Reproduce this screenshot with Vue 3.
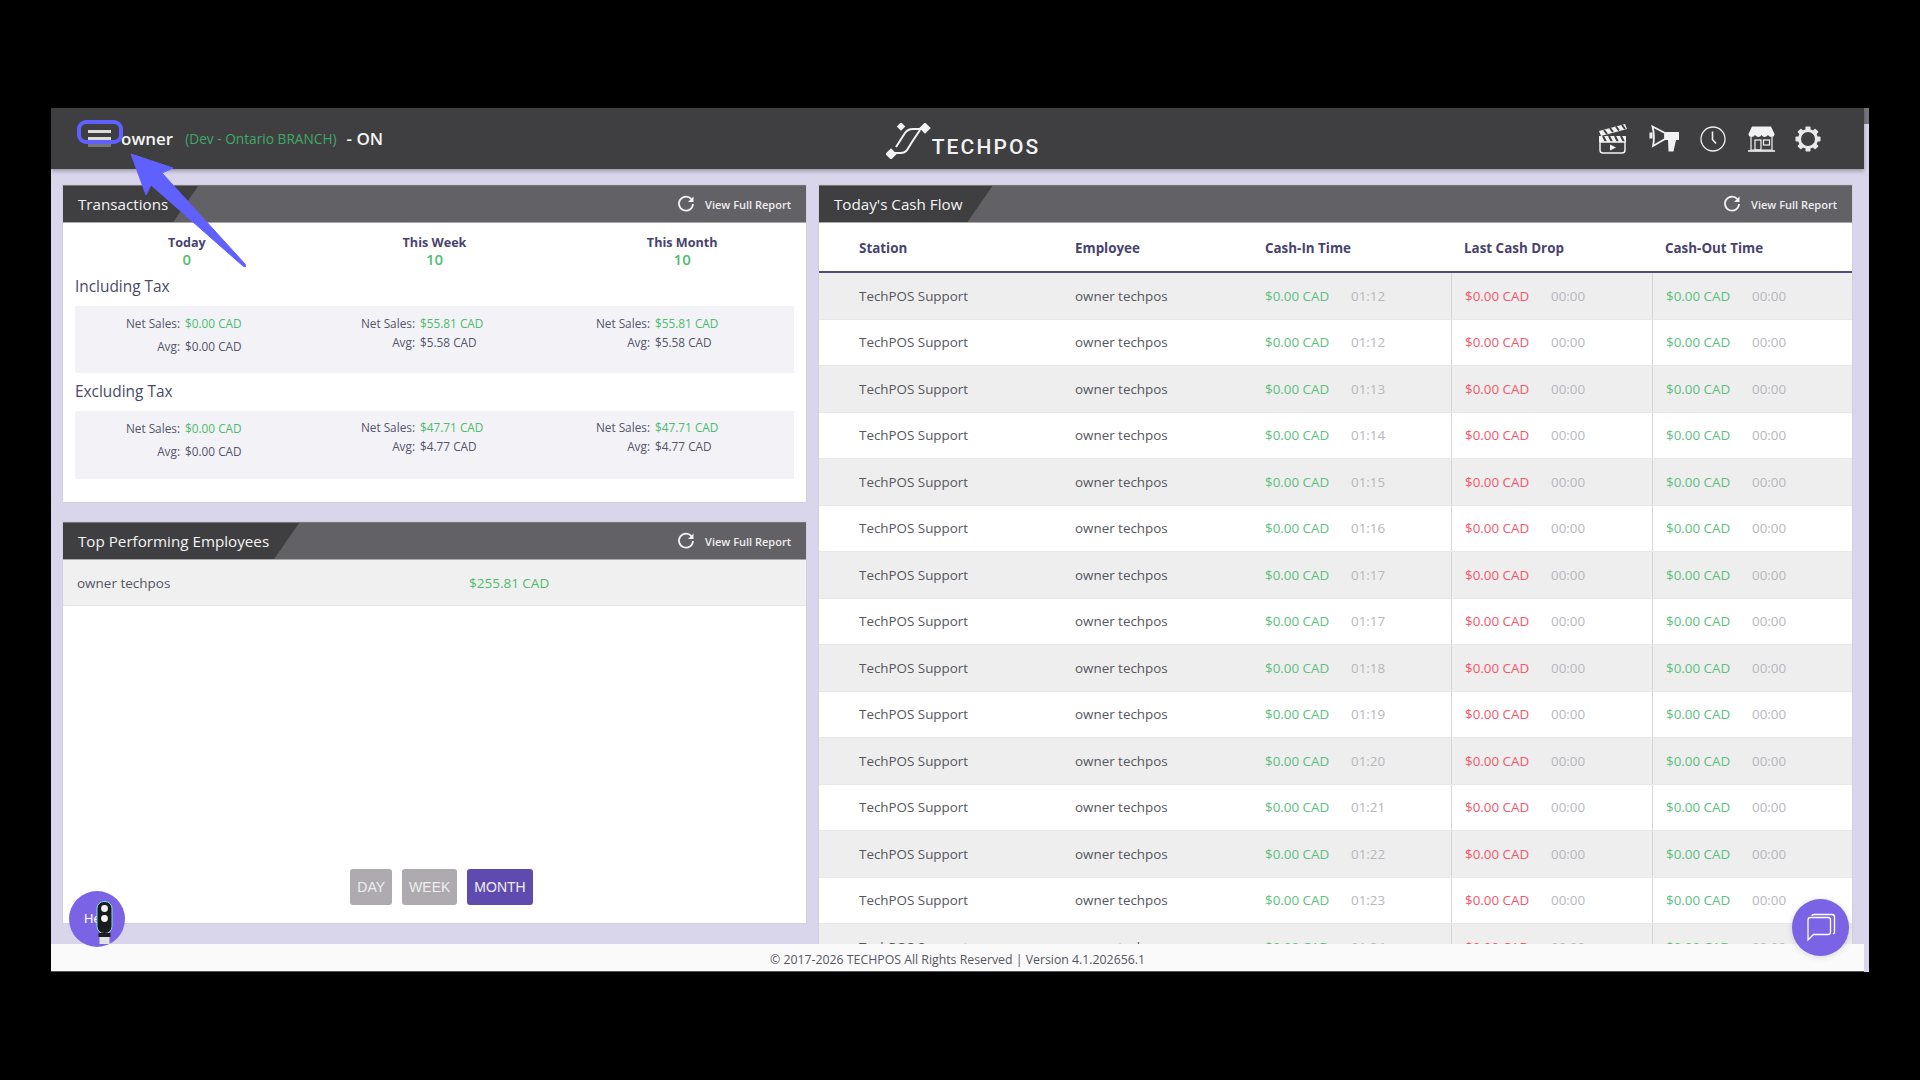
<template>
  <div class="shell">
    <div class="viewport">
      <header class="topbar">
        <div class="user">
          <span class="burger"><i></i><i></i><i class="dim"></i></span>
          <span class="user-name">owner</span>
          <span class="branch">(Dev - Ontario BRANCH)</span>
          <span class="user-name">- ON</span>
        </div>
        <div class="logo">
          <svg class="logo-mark" viewBox="0 0 50 36" width="50" height="36">
            <path d="M6 30 H15 C21 30 22 25 26 19 L34 7" fill="none" stroke="#f2f2f2" stroke-width="2" />
            <path d="M10 24 L19 10 C21 7 23 6 27 6 H42" fill="none" stroke="#f2f2f2" stroke-width="2" />
            <rect x="12" y="0.500" width="6" height="6" fill="#f2f2f2" transform="rotate(45 15 3.500)" />
            <rect x="35" y="1" width="8" height="8" fill="#f2f2f2" transform="rotate(45 39 5)" />
            <rect x="1" y="27" width="8" height="8" fill="#f2f2f2" transform="rotate(45 5 31)" />
          </svg>
          <span class="logo-text">TECHPOS</span>
        </div>
        <div class="tools">
          <svg class="tool-clapper" viewBox="0 0 30 31" width="30" height="31">
            <path d="M1 8 L27 1 L29 6 L3 13 Z" fill="#f2f2f2" />
            <path d="M6 7 L9 11 M12 5 L15 9 M18 3.500 L21 7.500 M24 2 L27 6" stroke="#3f3f41" stroke-width="2" />
            <rect x="1" y="13" width="27" height="6" fill="#f2f2f2" />
            <path d="M5 13 L8 19 M11 13 L14 19 M17 13 L20 19 M23 13 L26 19" stroke="#3f3f41" stroke-width="2" />
            <path d="M2 19 H27 V27 Q27 30 24 30 H5 Q2 30 2 27 Z" fill="none" stroke="#f2f2f2" stroke-width="1.500" />
            <path d="M12 21.500 L18 24.500 L12 27.500 Z" fill="#f2f2f2" />
          </svg>
          <svg class="tool-horn" viewBox="0 0 30 27" width="30" height="27">
            <path d="M3.500 1.500 L16 8 V14 L4 21 Q6 11 3.500 1.500 Z" fill="none" stroke="#f2f2f2" stroke-width="1.800" />
            <rect x="0.500" y="7.500" width="3" height="6" fill="#f2f2f2" />
            <path d="M16 7 H30 V15 H27 L24.500 26.500 H19.500 L19 15 H16 Z" fill="#f2f2f2" />
          </svg>
          <svg class="tool-clock" viewBox="0 0 26 26" width="26" height="26">
            <circle cx="13" cy="13" r="12" fill="none" stroke="#eeeeee" stroke-width="1.300" />
            <path d="M12.500 5.500 V13.500 L16 17.500" fill="none" stroke="#eeeeee" stroke-width="1.600" />
          </svg>
          <svg class="tool-store" viewBox="0 0 27 26" width="27" height="26">
            <path d="M4 0.500 H23 L26.500 8 Q26.500 11 23.500 11 Q21 11 20 9 Q18.500 11 16.500 11 Q14.500 11 13.500 9 Q12.500 11 10.500 11 Q8.500 11 7 9 Q6 11 3.500 11 Q0.500 11 0.500 8 Z" fill="#f2f2f2" />
            <path d="M3 11 V24 H24 V11" fill="none" stroke="#f2f2f2" stroke-width="1.200" />
            <path d="M0 25 H27" stroke="#f2f2f2" stroke-width="1.600" />
            <rect x="7" y="14" width="6" height="10" fill="none" stroke="#f2f2f2" stroke-width="1.200" />
            <rect x="15.500" y="14" width="6" height="5" fill="none" stroke="#f2f2f2" stroke-width="1.200" />
          </svg>
          <svg class="tool-gear" viewBox="0 0 26 26" width="26" height="26">
            <rect
              v-for="deg in gearTeeth"
              :key="deg"
              x="10.500"
              y="0.500"
              width="5"
              height="5"
              rx="0.800"
              fill="#e8e8e8"
              :transform="`rotate(${deg} 13 13)`"
            />
            <circle cx="13" cy="13" r="8.500" fill="none" stroke="#e8e8e8" stroke-width="3" />
          </svg>
        </div>
      </header>

      <main class="content">
        <div class="left-col">
          <section class="panel panel-transactions">
            <div class="panel-head">
              <h2 class="panel-title">Transactions</h2>
              <a class="report-link">
                <svg class="refresh" viewBox="0 0 18 18" width="18" height="18">
                  <path d="M14.500 4.300 A7 7 0 1 0 16 9" fill="none" stroke="#f4f4f4" stroke-width="1.800" />
                  <path d="M16.500 1.500 V7 H11 Z" fill="#f4f4f4" />
                </svg>
                View Full Report
              </a>
            </div>
            <div class="totals">
              <div v-for="t in totals" :key="t.label" class="total">
                <div class="total-label">{{ t.label }}</div>
                <div class="total-value">{{ t.value }}</div>
              </div>
            </div>
            <template v-for="group in taxGroups" :key="group.title">
              <h3 class="tax-title">{{ group.title }}</h3>
              <div class="tax-band" :class="group.cls">
                <div v-for="(c, i) in group.cols" :key="i" class="tax-cell" :class="{ roomy: i === 0 }">
                  <span class="tax-label">Net Sales:</span>
                  <span class="green">{{ c.net }}</span>
                  <span class="tax-label">Avg:</span>
                  <span class="tax-label">{{ c.avg }}</span>
                </div>
              </div>
            </template>
          </section>

          <section class="panel panel-employees">
            <div class="panel-head">
              <h2 class="panel-title">Top Performing Employees</h2>
              <a class="report-link">
                <svg class="refresh" viewBox="0 0 18 18" width="18" height="18">
                  <path d="M14.500 4.300 A7 7 0 1 0 16 9" fill="none" stroke="#f4f4f4" stroke-width="1.800" />
                  <path d="M16.500 1.500 V7 H11 Z" fill="#f4f4f4" />
                </svg>
                View Full Report
              </a>
            </div>
            <div class="employee-row">
              <span class="employee-name">owner techpos</span>
              <span class="green">$255.81 CAD</span>
            </div>
            <div class="ranges">
              <button class="range">DAY</button>
              <button class="range">WEEK</button>
              <button class="range active">MONTH</button>
            </div>
          </section>
        </div>

        <section class="panel panel-cash">
          <div class="panel-head">
            <h2 class="panel-title">Today's Cash Flow</h2>
            <a class="report-link">
              <svg class="refresh" viewBox="0 0 18 18" width="18" height="18">
                <path d="M14.500 4.300 A7 7 0 1 0 16 9" fill="none" stroke="#f4f4f4" stroke-width="1.800" />
                <path d="M16.500 1.500 V7 H11 Z" fill="#f4f4f4" />
              </svg>
              View Full Report
            </a>
          </div>
          <div class="cash-row cash-head">
            <div class="c-station">Station</div>
            <div>Employee</div>
            <div>Cash-In Time</div>
            <div class="c-money">Last Cash Drop</div>
            <div class="c-money">Cash-Out Time</div>
          </div>
          <div v-for="(time, i) in cashTimes" :key="i" class="cash-row cash-line" :class="{ odd: i % 2 === 0 }">
            <div class="c-station">TechPOS Support</div>
            <div>owner techpos</div>
            <div><span class="amount green-soft">$0.00 CAD</span><span class="time">{{ time }}</span></div>
            <div class="c-money divided"><span class="amount red">$0.00 CAD</span><span class="time">00:00</span></div>
            <div class="c-money divided"><span class="amount green-soft">$0.00 CAD</span><span class="time">00:00</span></div>
          </div>
        </section>
      </main>

      <footer class="footer">© 2017-2026 TECHPOS All Rights Reserved | Version 4.1.202656.1</footer>
    </div>
    <div class="scroll-track"><div class="scroll-thumb"></div></div>

    <!-- tutorial pointer over the menu button -->
    <span class="pointer-ring"></span>
    <svg class="pointer-arrow" viewBox="0 0 130 125" width="130" height="125">
      <path d="M1 1 L43 15 L32 20 L115 111 Q117 115 113 113 L21 32 L16 42 Z" fill="#6060ff" stroke="#6060ff" stroke-linejoin="round" />
    </svg>

    <button class="help-bubble">
      <span class="help-text">Help</span>
      <svg class="help-light" viewBox="0 0 17 43" width="17" height="43">
        <rect x="1" y="0.500" width="15" height="32" rx="7" fill="#1c1c1e" stroke="#7fe0dc" stroke-width="1" />
        <circle cx="8.500" cy="7.500" r="3.400" fill="#f4f4f4" />
        <circle cx="8.500" cy="17.500" r="3.400" fill="#f4f4f4" />
        <rect x="2.500" y="32" width="12" height="4" fill="#1c1c1e" />
        <rect x="3.500" y="36" width="10" height="7" fill="#e2e2e2" />
      </svg>
    </button>
    <button class="chat-bubble">
      <svg viewBox="0 0 30 30" width="30" height="30">
        <path d="M6 3 Q6 1.500 8 1.500 H26 Q28.500 1.500 28.500 4 V19 Q28.500 20.500 27 21" fill="none" stroke="#ffffff" stroke-width="1.300" />
        <path d="M2 7 Q2 4.500 4.500 4.500 H22 Q24.500 4.500 24.500 7 V19 Q24.500 21.500 22 21.500 H7.500 L2 27 Z" fill="none" stroke="#ffffff" stroke-width="1.300" />
      </svg>
    </button>
  </div>
</template>

<script setup>
const gearTeeth = [0, 45, 90, 135, 180, 225, 270, 315]

const totals = [
  { label: 'Today', value: '0' },
  { label: 'This Week', value: '10' },
  { label: 'This Month', value: '10' }
]

const taxGroups = [
  {
    title: 'Including Tax',
    cls: 'band-incl',
    cols: [
      { net: '$0.00 CAD', avg: '$0.00 CAD' },
      { net: '$55.81 CAD', avg: '$5.58 CAD' },
      { net: '$55.81 CAD', avg: '$5.58 CAD' }
    ]
  },
  {
    title: 'Excluding Tax',
    cls: 'band-excl',
    cols: [
      { net: '$0.00 CAD', avg: '$0.00 CAD' },
      { net: '$47.71 CAD', avg: '$4.77 CAD' },
      { net: '$47.71 CAD', avg: '$4.77 CAD' }
    ]
  }
]

const cashTimes = ['01:12', '01:12', '01:13', '01:14', '01:15', '01:16', '01:17', '01:17', '01:18', '01:19', '01:20', '01:21', '01:22', '01:23', '01:24']
</script>

<style>
html,
body {
  background: #000000;
}
</style>

<style scoped>
.shell {
  position: relative;
  display: flex;
  width: 1818px;
  height: 864px;
  margin: 108px 0 0 51px;
  overflow: hidden;
  background: #d9d6eb;
  font-family: "Open Sans", "Liberation Sans", sans-serif;
  color: #4a4a5e;
}

.viewport {
  display: flex;
  flex-direction: column;
  width: 1813px;
  height: 100%;
}

.scroll-track {
  width: 5px;
  background: #d9d6eb;
}

.scroll-thumb {
  height: 16px;
  background: #77777b;
}

.topbar {
  position: relative;
  z-index: 2;
  flex: none;
  display: flex;
  align-items: center;
  justify-content: space-between;
  height: 61px;
  background: #3f3f41;
  box-shadow: 0 2px 4px rgba(0, 0, 0, 0.3);
}

.user {
  display: flex;
  align-items: center;
  padding-left: 37px;
  width: 400px;
}

.burger {
  display: flex;
  flex-direction: column;
  gap: 4px;
  width: 23px;
  margin-right: 10px;
}

.burger i {
  display: block;
  height: 3px;
  background: #dcdcdc;
}

.burger i.dim {
  background: #77777a;
}

.user-name {
  font-size: 17px;
  font-weight: 600;
  color: #f4f4f4;
}

.branch {
  margin: 0 10px 0 12px;
  font-size: 13.700px;
  color: #3fa868;
}

.logo {
  display: flex;
  align-items: flex-end;
  margin-left: 17px;
  margin-top: 4px;
}

.logo-mark {
  margin-right: -4px;
}

.logo-text {
  font-family: Roboto, "Liberation Sans", sans-serif;
  font-size: 21px;
  font-weight: 500;
  letter-spacing: 2.100px;
  line-height: 24px;
  color: #f2f2f2;
}

.tools {
  display: flex;
  align-items: center;
  width: 400px;
  justify-content: flex-end;
  padding-right: 43px;
}

.tool-clapper {
  margin-right: 21px;
}

.tool-horn {
  margin-right: 21px;
}

.tool-clock {
  margin-right: 22px;
}

.tool-store {
  margin-right: 20px;
}

.content {
  flex: 1;
  min-height: 0;
  display: grid;
  grid-template-columns: 743px 1033px;
  column-gap: 13px;
  padding: 16px 0 0 12px;
  overflow: hidden;
}

.left-col {
  display: flex;
  flex-direction: column;
  gap: 20px;
}

.panel {
  display: flex;
  flex-direction: column;
  background: #ffffff;
  box-shadow: 0 0 0 1px #d2d0dd;
}

.panel-transactions {
  height: 317px;
}

.panel-employees {
  height: 401px;
}

.panel-cash {
  height: 820px;
}

.panel-head {
  flex: none;
  box-sizing: border-box;
  display: flex;
  align-items: stretch;
  justify-content: space-between;
  height: 38px;
  background: #626165;
  border-top: 1px solid #77777a;
  border-bottom: 1px solid #a9a9ab;
}

.panel-title {
  margin: 0;
  padding: 0 30px 0 15px;
  font-size: 15.200px;
  font-weight: 400;
  line-height: 36px;
  color: #f4f4f4;
  background: #3f3f41;
  clip-path: polygon(0 0, 100% 0, calc(100% - 25px) 100%, 0 100%);
}

.report-link {
  display: flex;
  align-items: center;
  gap: 10px;
  padding-right: 15px;
  font-size: 11px;
  font-weight: 600;
  color: #eeeeee;
}

.refresh {
  margin-top: -1px;
}

.totals {
  display: grid;
  grid-template-columns: repeat(3, 1fr);
  padding-top: 12px;
}

.total {
  text-align: center;
}

.total-label {
  font-size: 12.600px;
  font-weight: 700;
  line-height: 16px;
  color: #48436e;
}

.total-value {
  font-size: 15px;
  font-weight: 600;
  line-height: 16px;
  color: #52bd72;
}

.tax-title {
  margin: 0;
  padding: 8px 0 0 12px;
  font-size: 15.400px;
  font-weight: 400;
  line-height: 24px;
  color: #4a4a66;
}

.tax-band {
  display: grid;
  grid-template-columns: repeat(3, 235px);
  height: 67px;
  margin: 7px 12px 0;
  background: #f2f2f7;
}

.band-excl {
  height: 68px;
  margin-top: 7px;
}

.band-incl + .tax-title {
  padding-top: 7px;
}

.tax-cell {
  display: grid;
  grid-template-columns: 105px auto;
  grid-auto-rows: 19px;
  column-gap: 5px;
  align-content: start;
  padding-top: 8px;
  font-size: 11.800px;
  line-height: 19px;
}

.tax-cell.roomy {
  grid-auto-rows: 23px;
  line-height: 23px;
  padding-top: 6px;
}

.band-excl .tax-cell {
  padding-top: 7px;
}

.band-excl .tax-cell.roomy {
  padding-top: 6px;
}

.tax-cell > :nth-child(odd) {
  text-align: right;
}

.tax-label {
  color: #55556a;
}

.green {
  color: #4cbc6c;
}

.employee-row {
  flex: none;
  box-sizing: border-box;
  display: grid;
  grid-template-columns: 392px auto;
  align-items: center;
  height: 46px;
  padding-left: 14px;
  font-size: 13.500px;
  background: #f0f0f0;
  border-bottom: 1px solid #e4e4e4;
}

.employee-name {
  color: #55555f;
}

.ranges {
  margin-top: auto;
  display: flex;
  justify-content: center;
  gap: 10px;
  padding: 0 0 18px 14px;
}

.range {
  height: 36px;
  padding: 0 7px;
  border: none;
  border-radius: 3px;
  background: #adabb0;
  color: #eeeeee;
  font-family: "Liberation Sans", Arial, sans-serif;
  font-size: 14px;
}

.range.active {
  background: #5f4bb0;
}

.cash-row {
  display: grid;
  grid-template-columns: 256px 190px 186px 201px 200px;
  font-size: 13.400px;
}

.cash-row > div {
  display: flex;
  align-items: center;
}

.cash-head {
  flex: none;
  box-sizing: border-box;
  height: 50px;
  padding-top: 1px;
  font-weight: 700;
  color: #48436e;
  border-bottom: 2px solid #514c78;
}

.cash-line {
  flex: none;
  box-sizing: border-box;
  height: 46.500px;
  color: #56565e;
  background: #ffffff;
  border-bottom: 1px solid #e8e8e8;
}

.cash-line.odd {
  background: #eeeeee;
}

.c-station {
  padding-left: 40px;
}

.c-money {
  padding-left: 13px;
}

.divided {
  border-left: 1px solid #d6d6d6;
}

.amount {
  width: 86px;
}

.green-soft {
  color: #5cc07f;
}

.red {
  color: #f5566b;
}

.time {
  color: #b7b7bd;
}

.footer {
  position: relative;
  z-index: 1;
  flex: none;
  box-sizing: border-box;
  height: 28px;
  padding-top: 4px;
  font-size: 12.300px;
  line-height: 23px;
  text-align: center;
  color: #55555f;
  background: #fafafa;
  border-bottom: 1px solid #555555;
}

.pointer-ring {
  position: absolute;
  left: 26px;
  top: 12px;
  width: 46px;
  height: 24px;
  box-sizing: border-box;
  border: 4px solid #6060ff;
  border-radius: 9px;
  z-index: 5;
}

.pointer-arrow {
  position: absolute;
  left: 79px;
  top: 45px;
  z-index: 5;
}

.help-bubble {
  position: absolute;
  left: 18px;
  top: 783px;
  width: 56px;
  height: 56px;
  padding: 0;
  border: none;
  border-radius: 50%;
  background: #7b63e5;
  z-index: 4;
}

.help-text {
  position: absolute;
  left: 15px;
  top: 20px;
  font-size: 13px;
  color: #ffffff;
}

.help-light {
  position: absolute;
  left: 27px;
  top: 10px;
}

.chat-bubble {
  position: absolute;
  left: 1741px;
  top: 791px;
  display: flex;
  align-items: center;
  justify-content: center;
  width: 57px;
  height: 57px;
  padding: 0;
  border: none;
  border-radius: 50%;
  background: #7b63e5;
  box-shadow: 0 1px 6px rgba(0, 0, 0, 0.15);
  z-index: 4;
}
</style>
